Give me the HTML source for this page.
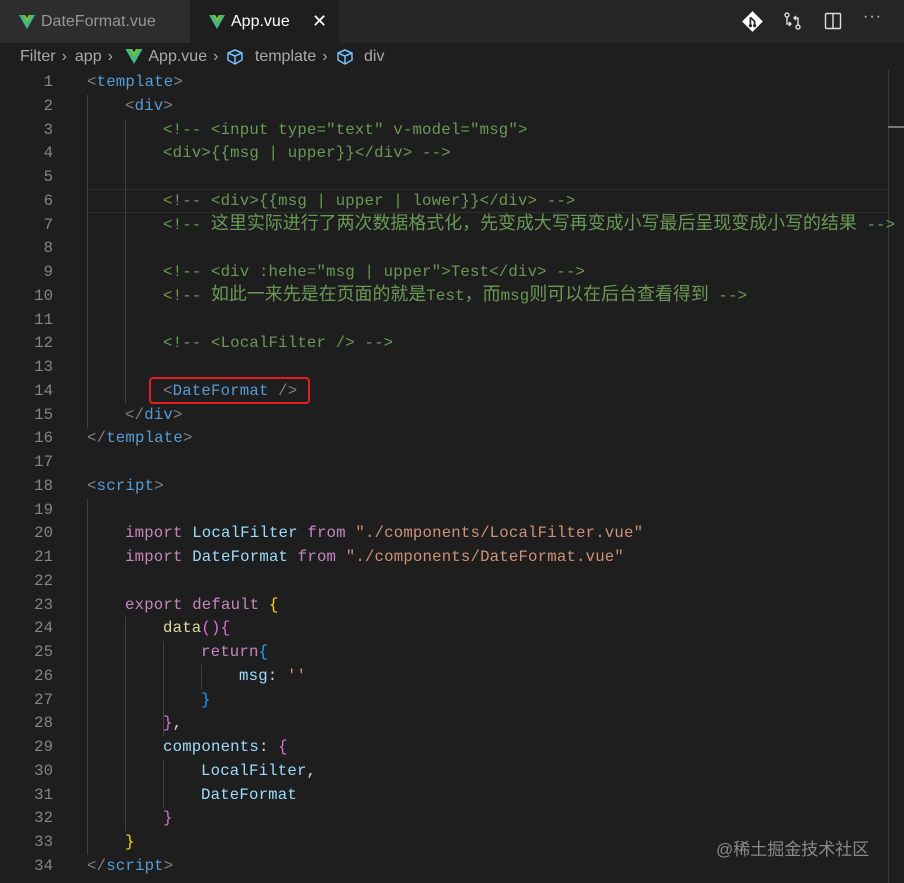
<!DOCTYPE html>
<html><head><meta charset="utf-8"><style>
body{margin:0;width:904px;height:883px;background:#1e1e1e;overflow:hidden;font-family:"Liberation Sans",sans-serif;position:relative}
.tabs{position:absolute;left:0;top:0;width:904px;height:43px;background:#252526}
.tab{position:absolute;top:0;height:43px;line-height:43px;font-size:16px}
.v{display:inline-block;vertical-align:middle;margin-right:6px}
.bc{position:absolute;top:43px;left:20px;height:28px;line-height:28px;font-size:16px;color:#a9a9a9}
.bc span{margin:0 8px 0 6px}
.code{position:absolute;left:0;top:71px;width:904px;font-family:"Liberation Mono",monospace;font-size:15.7px}
.ln{height:23.76px;line-height:23.76px;white-space:pre;position:relative}
.n{position:absolute;right:851px;color:#858585;text-align:right}
.t{position:absolute;left:87px;color:#d4d4d4;letter-spacing:0.18px}
.c{color:#6a9955}.g{color:#808080}.b{color:#569cd6}.k{color:#c586c0}.i{color:#9cdcfe}.s{color:#ce9178}.f{color:#dcdcaa}
.y{color:#ffd700}.p{color:#da70d6}.bl{color:#179fff}
.cj{font-family:"Noto Sans CJK SC",sans-serif;font-size:17.9px;line-height:1;letter-spacing:0.05px}
.guide{position:absolute;width:1px;background:#404040}
</style></head><body>
<div class="tabs">
 <div class="tab" style="left:0;width:190px;background:#2d2d2d;color:#969696"><span style="margin-left:19px"></span><svg class="v" width="16" height="14" viewBox="0 0 16 14"><path d="M0 0h3.2L8 8 12.8 0H16L8 14z" fill="#41b883"/><path d="M3.2 0h3L8 3 9.8 0h3L8 8z" fill="#7cbf3f"/></svg>DateFormat.vue</div>
 <div class="tab" style="left:190px;width:148px;background:#1e1e1e;color:#fff"><span style="margin-left:19px"></span><svg class="v" width="16" height="14" viewBox="0 0 16 14"><path d="M0 0h3.2L8 8 12.8 0H16L8 14z" fill="#41b883"/><path d="M3.2 0h3L8 3 9.8 0h3L8 8z" fill="#7cbf3f"/></svg>App.vue<span style="position:absolute;left:122px;font-size:18px">✕</span></div>
 <svg style="position:absolute;left:742px;top:11px" width="21" height="21" viewBox="0 0 20 20"><rect x="3" y="3" width="14" height="14" transform="rotate(45 10 10)" fill="#fff"/><path d="M8 6l4 4v4M8 6v8" stroke="#252526" stroke-width="1.6" fill="none"/><circle cx="8" cy="14" r="1.5" fill="#252526"/><circle cx="12" cy="14" r="1.5" fill="#252526"/></svg>
 <svg style="position:absolute;left:783px;top:11px" width="20" height="20" viewBox="0 0 20 20" fill="none" stroke="#ddd" stroke-width="1.4"><circle cx="4" cy="4" r="2"/><circle cx="15" cy="16" r="2"/><path d="M4 6v7h4M6 11l2 2-2 2M15 14V7h-4M13 5l-2 2 2 2"/></svg>
 <svg style="position:absolute;left:824px;top:12px" width="18" height="18" viewBox="0 0 18 18" fill="none" stroke="#ddd" stroke-width="1.4"><rect x="1.5" y="1.5" width="15" height="15" rx="1"/><path d="M9 1.5v15"/></svg>
 <div style="position:absolute;left:863px;top:8px;color:#ccc;font-size:16px;letter-spacing:1px">···</div>
</div>
<div class="bc">Filter<span>›</span>app<span>›</span> <svg class="v" style="margin-right:5px" width="18" height="15" viewBox="0 0 16 14"><path d="M0 0h3.2L8 8 12.8 0H16L8 14z" fill="#41b883"/><path d="M3.2 0h3L8 3 9.8 0h3L8 8z" fill="#7cbf3f"/></svg>App.vue<span>›</span><svg class="v" width="18" height="16" viewBox="0 0 18 16" fill="none" stroke="#75beff" stroke-width="1.5"><path d="M9 1l7 3v7l-7 4-7-4V4zM2 4l7 3 7-3M9 7v8"/></svg> template<span>›</span><svg class="v" width="18" height="16" viewBox="0 0 18 16" fill="none" stroke="#75beff" stroke-width="1.5"><path d="M9 1l7 3v7l-7 4-7-4V4zM2 4l7 3 7-3M9 7v8"/></svg> div</div>
<div style="position:absolute;left:888px;top:70px;width:1px;height:813px;background:#3a3a3a"></div>
<div style="position:absolute;left:888px;top:126px;width:16px;height:2px;background:#777"></div>
<div style="position:absolute;left:87px;top:189px;width:801px;height:22px;border-top:1px solid #2f2f2f;border-bottom:1px solid #2f2f2f"></div>
<div class="guide" style="left:87px;top:95px;height:333px"></div>
<div class="guide" style="left:125px;top:119px;height:285px"></div>
<div class="guide" style="left:87px;top:499px;height:356px"></div>
<div class="guide" style="left:125px;top:617px;height:214px"></div>
<div class="guide" style="left:163px;top:641px;height:95px"></div>
<div class="guide" style="left:201px;top:665px;height:24px"></div>
<div class="guide" style="left:163px;top:760px;height:48px"></div>
<div style="position:absolute;left:149px;top:377px;width:161px;height:27px;border:2.5px solid #e02020;border-radius:4px;box-sizing:border-box"></div>
<div class="code">
<div class="ln"><span class="n">1</span><span class="t"><span class="g">&lt;</span><span class="b">template</span><span class="g">&gt;</span></span></div>
<div class="ln"><span class="n">2</span><span class="t" style="left:125px"><span class="g">&lt;</span><span class="b">div</span><span class="g">&gt;</span></span></div>
<div class="ln"><span class="n">3</span><span class="t c" style="left:163px">&lt;!-- &lt;input type="text" v-model="msg"&gt;</span></div>
<div class="ln"><span class="n">4</span><span class="t c" style="left:163px">&lt;div&gt;{{msg | upper}}&lt;/div&gt; --&gt;</span></div>
<div class="ln"><span class="n">5</span></div>
<div class="ln"><span class="n">6</span><span class="t c" style="left:163px">&lt;!-- &lt;div&gt;{{msg | upper | lower}}&lt;/div&gt; --&gt;</span></div>
<div class="ln"><span class="n">7</span><span class="t c" style="left:163px">&lt;!-- <span class="cj">这里实际进行了两次数据格式化，先变成大写再变成小写最后呈现变成小写的结果</span> --&gt;</span></div>
<div class="ln"><span class="n">8</span></div>
<div class="ln"><span class="n">9</span><span class="t c" style="left:163px">&lt;!-- &lt;div :hehe="msg | upper"&gt;Test&lt;/div&gt; --&gt;</span></div>
<div class="ln"><span class="n">10</span><span class="t c" style="left:163px">&lt;!-- <span class="cj">如此一来先是在页面的就是</span>Test<span class="cj">，而</span>msg<span class="cj">则可以在后台查看得到</span> --&gt;</span></div>
<div class="ln"><span class="n">11</span></div>
<div class="ln"><span class="n">12</span><span class="t c" style="left:163px">&lt;!-- &lt;LocalFilter /&gt; --&gt;</span></div>
<div class="ln"><span class="n">13</span></div>
<div class="ln"><span class="n">14</span><span class="t" style="left:163px"><span class="g">&lt;</span><span class="b">DateFormat</span> <span class="g">/&gt;</span></span></div>
<div class="ln"><span class="n">15</span><span class="t" style="left:125px"><span class="g">&lt;/</span><span class="b">div</span><span class="g">&gt;</span></span></div>
<div class="ln"><span class="n">16</span><span class="t"><span class="g">&lt;/</span><span class="b">template</span><span class="g">&gt;</span></span></div>
<div class="ln"><span class="n">17</span></div>
<div class="ln"><span class="n">18</span><span class="t"><span class="g">&lt;</span><span class="b">script</span><span class="g">&gt;</span></span></div>
<div class="ln"><span class="n">19</span></div>
<div class="ln"><span class="n">20</span><span class="t" style="left:125px"><span class="k">import</span> <span class="i">LocalFilter</span> <span class="k">from</span> <span class="s">"./components/LocalFilter.vue"</span></span></div>
<div class="ln"><span class="n">21</span><span class="t" style="left:125px"><span class="k">import</span> <span class="i">DateFormat</span> <span class="k">from</span> <span class="s">"./components/DateFormat.vue"</span></span></div>
<div class="ln"><span class="n">22</span></div>
<div class="ln"><span class="n">23</span><span class="t" style="left:125px"><span class="k">export</span> <span class="k">default</span> <span class="y">{</span></span></div>
<div class="ln"><span class="n">24</span><span class="t" style="left:163px"><span class="f">data</span><span class="p">(){</span></span></div>
<div class="ln"><span class="n">25</span><span class="t" style="left:201px"><span class="k">return</span><span class="bl">{</span></span></div>
<div class="ln"><span class="n">26</span><span class="t" style="left:239px"><span class="i">msg</span>: <span class="s">''</span></span></div>
<div class="ln"><span class="n">27</span><span class="t" style="left:201px"><span class="bl">}</span></span></div>
<div class="ln"><span class="n">28</span><span class="t" style="left:163px"><span class="p">}</span>,</span></div>
<div class="ln"><span class="n">29</span><span class="t" style="left:163px"><span class="i">components</span>: <span class="p">{</span></span></div>
<div class="ln"><span class="n">30</span><span class="t" style="left:201px"><span class="i">LocalFilter</span>,</span></div>
<div class="ln"><span class="n">31</span><span class="t" style="left:201px"><span class="i">DateFormat</span></span></div>
<div class="ln"><span class="n">32</span><span class="t" style="left:163px"><span class="p">}</span></span></div>
<div class="ln"><span class="n">33</span><span class="t" style="left:125px"><span class="y">}</span></span></div>
<div class="ln"><span class="n">34</span><span class="t"><span class="g">&lt;/</span><span class="b">script</span><span class="g">&gt;</span></span></div>
</div>
<div style="position:absolute;left:716px;top:835px;font-family:'Liberation Sans','Noto Sans CJK SC',sans-serif;font-size:17px;color:#8a8a8a">@稀土掘金技术社区</div>
</body></html>
